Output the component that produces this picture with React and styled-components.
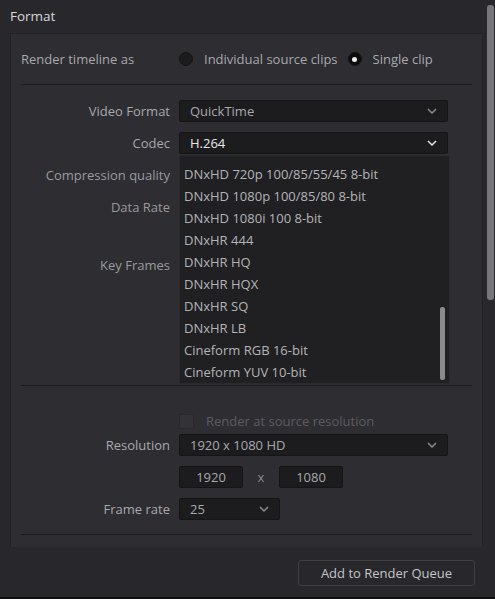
import React from "react";
import styled, { createGlobalStyle } from "styled-components";

const G = createGlobalStyle`
  html,body{margin:0;padding:0;background:#28282c;}
  body{font-family:"Open Sans","Noto Sans",sans-serif;font-size:13px;color:#a8a8ad;}
`;
const Page = styled.div`width:495px;height:599px;position:relative;overflow:hidden;background:#28282c;border-bottom:2px solid #111;box-sizing:border-box;`;
const Title = styled.div`color:#d6d6d8;font-size:13.5px;padding:7px 0 0 10px;height:33px;box-sizing:border-box;`;
const Panel = styled.div`margin:0 12px 0 10px;height:514px;background:#2d2d32;border:1px solid #222226;border-bottom:none;box-sizing:border-box;padding:0 10px;display:flex;flex-direction:column;`;
const Radios = styled.div`display:flex;align-items:center;height:50px;border-bottom:1px solid #1c1c1f;`;
const RLabel = styled.span`width:158px;`;
const Radio = styled.span`width:14px;height:14px;border-radius:50%;background:${p=>p.on?"#0d0d0f":"#1b1b1d"};border:1px solid #151517;box-sizing:border-box;margin-right:11px;display:flex;align-items:center;justify-content:center;
  &::after{content:"";width:5px;height:5px;border-radius:50%;background:${p=>p.on?"#eee":"transparent"};}`;
const ROpt = styled.span`margin-right:10px;`;
const Row = styled.div`display:grid;grid-template-columns:149px 1fr;column-gap:9px;align-items:${p=>p.top?"start":"center"};height:${p=>p.h}px;position:relative;`;
const Label = styled.div`text-align:right;color:${p=>p.dim?"#9a9a9f":"#a8a8ad"};padding-top:${p=>p.pt||0}px;`;
const Select = styled.div`height:22px;width:${p=>p.w||269}px;background:#1c1c1f;border:1px solid #151517;border-radius:2px;box-sizing:border-box;display:flex;align-items:center;justify-content:space-between;padding:0 10px;color:${p=>p.bright?"#e8e8ea":"#a8a8ad"};`;
const Chev = ({c="#8a8a8e"})=> <svg width="10" height="6" viewBox="0 0 10 6"><path d="M1 1l4 4 4-4" stroke={c} strokeWidth="1.5" fill="none"/></svg>;
const Menu = styled.div`position:absolute;left:158px;top:23px;width:271px;height:229px;background:#202023;border:1px solid #2a2a2e;box-sizing:border-box;padding:7px 0 0 4px;z-index:2;`;
const Item = styled.div`height:22px;line-height:22px;color:#b4b4b8;`;
const Thumb = styled.div`position:absolute;right:4px;top:151px;width:5px;height:73px;background:#8a8a8e;border-radius:2px;`;
const Sep = styled.div`border-top:1px solid #1c1c1f;`;
const Check = styled.div`display:flex;align-items:center;gap:12px;color:#5c5c60;`;
const Box = styled.span`width:13px;height:13px;background:#333337;border:1px solid #2a2a2e;border-radius:2px;`;
const Inputs = styled.div`display:flex;align-items:center;`;
const Input = styled.div`width:64px;height:22px;background:#1c1c1f;border:1px solid #151517;border-radius:2px;box-sizing:border-box;display:flex;align-items:center;justify-content:center;color:#a8a8ad;`;
const X = styled.span`width:36px;text-align:center;color:#8a8a8e;`;
const Footer = styled.div`display:flex;justify-content:flex-end;padding:13px 20px 0 0;`;
const Button = styled.div`width:177px;height:26px;border:1px solid #3e3e43;border-radius:3px;box-sizing:border-box;display:flex;align-items:center;justify-content:center;color:#c4c4c8;font-size:13px;`;
const Scroll = styled.div`position:absolute;right:1px;top:5px;width:7px;height:295px;background:#77777b;border-radius:3px;`;

const items=["DNxHD 720p 100/85/55/45 8-bit","DNxHD 1080p 100/85/80 8-bit","DNxHD 1080i 100 8-bit","DNxHR 444","DNxHR HQ","DNxHR HQX","DNxHR SQ","DNxHR LB","Cineform RGB 16-bit","Cineform YUV 10-bit"];

export default function App(){
  return <Page><G/>
    <Title>Format</Title>
    <Panel>
      <Radios><RLabel>Render timeline as</RLabel><Radio/><ROpt>Individual source clips</ROpt><Radio on/><ROpt>Single clip</ROpt></Radios>
      <Row h={15}/>
      <Row h={22}><Label>Video Format</Label><Select>QuickTime<Chev/></Select></Row>
      <Row h={10}/>
      <Row h={22}><Label>Codec</Label><Select bright>H.264<Chev c="#e0e0e0"/></Select>
        <Menu>{items.map(t=><Item key={t}>{t}</Item>)}<Thumb/></Menu>
      </Row>
      <Row h={231} top><Label dim pt={12}>Compression quality<br/><span style={{display:"block",height:14}}/>Data Rate<br/><span style={{display:"block",height:40}}/>Key Frames</Label><div/></Row>
      <Sep/>
      <Row h={26}/>
      <Row h={18}><div/><Check><Box/>Render at source resolution</Check></Row>
      <Row h={4}/>
      <Row h={22}><Label>Resolution</Label><Select>1920 x 1080 HD<Chev/></Select></Row>
      <Row h={10}/>
      <Row h={22}><div/><Inputs><Input>1920</Input><X>x</X><Input>1080</Input></Inputs></Row>
      <Row h={10}/>
      <Row h={22}><Label>Frame rate</Label><Select w={101}>25<Chev/></Select></Row>
      <Row h={14}/>
      <Sep/>
    </Panel>
    <Footer><Button>Add to Render Queue</Button></Footer>
    <Scroll/>
  </Page>;
}
